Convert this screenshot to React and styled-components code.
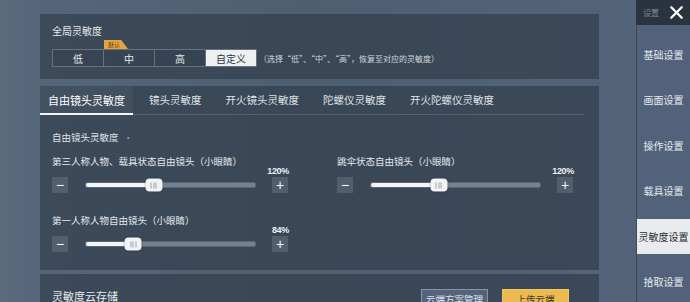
import React from "react";
import styled, { createGlobalStyle } from "styled-components";
import { X } from "lucide-react";

const GlobalStyle = createGlobalStyle`
  body {
    margin: 0;
    font-family: "Noto Sans CJK SC", "Noto Sans", sans-serif;
    background: #526277;
  }
`;

const Screen = styled.div`
  width: 690px;
  height: 302px;
  overflow: hidden;
  display: flex;
  background: linear-gradient(90deg, #5b6b7e 0px, #56667a 40px, #4f5f72 300px, #53637a 100%);
  color: #e4e8ec;
`;

const Main = styled.div`
  width: 559px;
  margin-left: 40px;
  padding-top: 14px;
  display: flex;
  flex-direction: column;
`;

const Card = styled.div`
  background: rgba(44, 55, 68, 0.6);
  margin-bottom: ${(p) => p.$gap || 0}px;
`;

const GlobalCard = styled(Card)`
  padding: 10px 12px 12px;
`;

const Title = styled.div`
  font-size: 10px;
  line-height: 14px;
  color: #e8ebee;
`;

const SegmentRow = styled.div`
  display: flex;
  align-items: center;
  margin-top: 11px;
`;

const Segments = styled.div`
  display: flex;
  border: 1px solid #64717f;
  height: 16px;
`;

const Segment = styled.div`
  position: relative;
  width: 50px;
  display: flex;
  align-items: center;
  justify-content: center;
  font-size: 10px;
  color: ${(p) => (p.$active ? "#2c3138" : "#e4e8ec")};
  background: ${(p) => (p.$active ? "#eef0f2" : "rgba(0,0,0,0.06)")};
  border-left: ${(p) => (p.$first ? "none" : "1px solid #64717f")};
`;

const Badge = styled.span`
  position: absolute;
  left: 0;
  top: -10px;
  width: 24px;
  height: 9px;
  background: #e2a43e;
  color: #5a3c10;
  font-size: 6px;
  line-height: 9px;
  padding-left: 4px;
  box-sizing: border-box;
  clip-path: polygon(0 0, 72% 0, 100% 100%, 0 100%);
`;

const Hint = styled.span`
  margin-left: 2px;
  font-size: 8px;
  color: #d2d7dc;
  white-space: nowrap;
`;

const TabsBar = styled.div`
  display: flex;
  gap: 8px;
  height: 28px;
  margin-right: 14px;
  border-bottom: 1px solid rgba(255, 255, 255, 0.14);
`;

const Tab = styled.div`
  padding: 0 8px;
  display: flex;
  align-items: center;
  font-size: ${(p) => (p.$active ? "11px" : "10.5px")};
  color: ${(p) => (p.$active ? "#ffffff" : "#dfe3e7")};
  border-bottom: 2px solid ${(p) => (p.$active ? "#f2f4f6" : "transparent")};
  margin-bottom: -1px;
  background: ${(p) => (p.$active ? "rgba(255,255,255,0.04)" : "transparent")};
  white-space: nowrap;
`;

const TabBody = styled.div`
  padding: 16px 12px 18px;
`;

const SectionLabel = styled.div`
  font-size: 9.5px;
  line-height: 12px;
  color: #dfe3e7;

  &::after {
    content: "·";
    margin-left: 5px;
    color: #8e99a4;
  }
`;

const SliderGrid = styled.div`
  display: grid;
  grid-template-columns: 236px 236px;
  column-gap: 49px;
  row-gap: 21px;
  margin-top: 12px;
`;

const Group = styled.div`
  display: flex;
  flex-direction: column;
`;

const GroupLabel = styled.div`
  font-size: 9.5px;
  line-height: 12px;
  color: #e4e8ec;
  white-space: nowrap;
`;

const Percent = styled.div`
  align-self: flex-end;
  margin-top: -1px;
  margin-right: -1px;
  font-family: "Liberation Sans Narrow", "Liberation Sans", sans-serif;
  font-size: 9px;
  font-weight: bold;
  line-height: 10px;
  letter-spacing: -0.3px;
  color: #eef1f3;
  white-space: nowrap;
`;

const SliderRow = styled.div`
  display: flex;
  align-items: center;
  height: 16px;
  margin-top: 1px;
`;

const StepButton = styled.div`
  width: 16px;
  height: 16px;
  flex: none;
  display: flex;
  align-items: center;
  justify-content: center;
  background: rgba(110, 122, 136, 0.45);
  color: #f2f4f6;
  font-size: 14px;
  line-height: 1;
  font-family: "Liberation Sans", sans-serif;
`;

const Track = styled.div`
  position: relative;
  flex: 1;
  height: 4px;
  margin: 0 16px 0 17px;
  background: #75818e;
  border: 1px solid #5a6673;
  border-radius: 2px;
`;

const Fill = styled.div`
  height: 100%;
  background: #f4f5f6;
  border-radius: 2px;
`;

const Thumb = styled.div`
  position: absolute;
  top: 50%;
  width: 17px;
  height: 13px;
  transform: translate(-50%, -50%);
  background: #f1f3f5;
  border-radius: 4px;
  box-shadow: 0 0 2px rgba(0, 0, 0, 0.4);
  display: flex;
  align-items: center;
  justify-content: center;
  gap: 1.5px;

  span {
    width: 1px;
    height: 6px;
    background: #9aa3ad;
  }
`;

const CloudCard = styled(Card)`
  display: flex;
  align-items: flex-start;
  padding: 16px 30px 0 12px;
  height: 40px;
`;

const CloudTitle = styled.div`
  font-size: 11px;
  line-height: 12px;
  color: #e8ebee;
  flex: 1;
`;

const CloudButton = styled.div`
  width: 67px;
  height: 20px;
  margin-top: -1px;
  margin-left: ${(p) => (p.$gold ? 14 : 0)}px;
  box-sizing: border-box;
  display: flex;
  align-items: center;
  justify-content: center;
  font-size: 9.5px;
  color: ${(p) => (p.$gold ? "#3a3326" : "#dfe4ee")};
  background: ${(p) => (p.$gold ? "#ecbb4f" : "#56647b")};
  border: 1px solid ${(p) => (p.$gold ? "#f2c862" : "#8593ad")};
`;

const Gutter = styled.div`
  flex: 1;
`;

const Sidebar = styled.div`
  width: 54px;
  display: flex;
  flex-direction: column;
`;

const SideHeader = styled.div`
  height: 25px;
  background: #2a333e;
  display: flex;
  align-items: center;
  justify-content: space-between;
  padding: 0 3px 0 7px;
`;

const SideHeaderLabel = styled.span`
  font-size: 8px;
  color: #7f8993;
`;

const SideList = styled.div`
  flex: 1;
  display: flex;
  flex-direction: column;
  gap: 10.5px;
  padding-top: 11.5px;
  background: #52627a;
  border-left: 1px solid rgba(30, 40, 52, 0.45);
`;

const SideItem = styled.div`
  height: 35px;
  flex: none;
  display: flex;
  align-items: center;
  justify-content: center;
  font-size: 10px;
  white-space: nowrap;
  color: ${(p) => (p.$active ? "#262b32" : "#e8ebee")};
  background: ${(p) => (p.$active ? "#e9ebee" : "transparent")};
`;

const LEVELS = ["低", "中", "高", "自定义"];
const TABS = ["自由镜头灵敏度", "镜头灵敏度", "开火镜头灵敏度", "陀螺仪灵敏度", "开火陀螺仪灵敏度"];
const SLIDERS = [
  { label: "第三人称人物、载具状态自由镜头（小眼睛）", value: 120 },
  { label: "跳伞状态自由镜头（小眼睛）", value: 120 },
  { label: "第一人称人物自由镜头（小眼睛）", value: 84 },
];
const MENU = ["基础设置", "画面设置", "操作设置", "载具设置", "灵敏度设置", "拾取设置"];

const Slider = ({ label, value }) => {
  const pct = (value / 300) * 100;
  return (
    <Group>
      <GroupLabel>{label}</GroupLabel>
      <Percent>{value}%</Percent>
      <SliderRow>
        <StepButton>−</StepButton>
        <Track>
          <Fill style={{ width: `${pct}%` }} />
          <Thumb style={{ left: `${pct}%` }}>
            <span />
            <span />
            <span />
          </Thumb>
        </Track>
        <StepButton>+</StepButton>
      </SliderRow>
    </Group>
  );
};

const App = () => {
  return (
    <Screen>
      <GlobalStyle />
      <Main>
        <GlobalCard $gap={7}>
          <Title>全局灵敏度</Title>
          <SegmentRow>
            <Segments>
              {LEVELS.map((l, i) => (
                <Segment key={l} $first={i === 0} $active={l === "自定义"}>
                  {l === "中" && <Badge>默认</Badge>}
                  {l}
                </Segment>
              ))}
            </Segments>
            <Hint>（选择“低”、“中”、“高”，恢复至对应的灵敏度）</Hint>
          </SegmentRow>
        </GlobalCard>

        <Card $gap={4}>
          <TabsBar>
            {TABS.map((t, i) => (
              <Tab key={t} $active={i === 0}>
                {t}
              </Tab>
            ))}
          </TabsBar>
          <TabBody>
            <SectionLabel>自由镜头灵敏度</SectionLabel>
            <SliderGrid>
              {SLIDERS.map((s) => (
                <Slider key={s.label} {...s} />
              ))}
            </SliderGrid>
          </TabBody>
        </Card>

        <CloudCard>
          <CloudTitle>灵敏度云存储</CloudTitle>
          <CloudButton>云端方案管理</CloudButton>
          <CloudButton $gold>上传云端</CloudButton>
        </CloudCard>
      </Main>
      <Gutter />
      <Sidebar>
        <SideHeader>
          <SideHeaderLabel>设置</SideHeaderLabel>
          <X size={21} color="#ffffff" strokeWidth={2.6} />
        </SideHeader>
        <SideList>
          {MENU.map((m) => (
            <SideItem key={m} $active={m === "灵敏度设置"}>
              {m}
            </SideItem>
          ))}
        </SideList>
      </Sidebar>
    </Screen>
  );
};

export default App;
